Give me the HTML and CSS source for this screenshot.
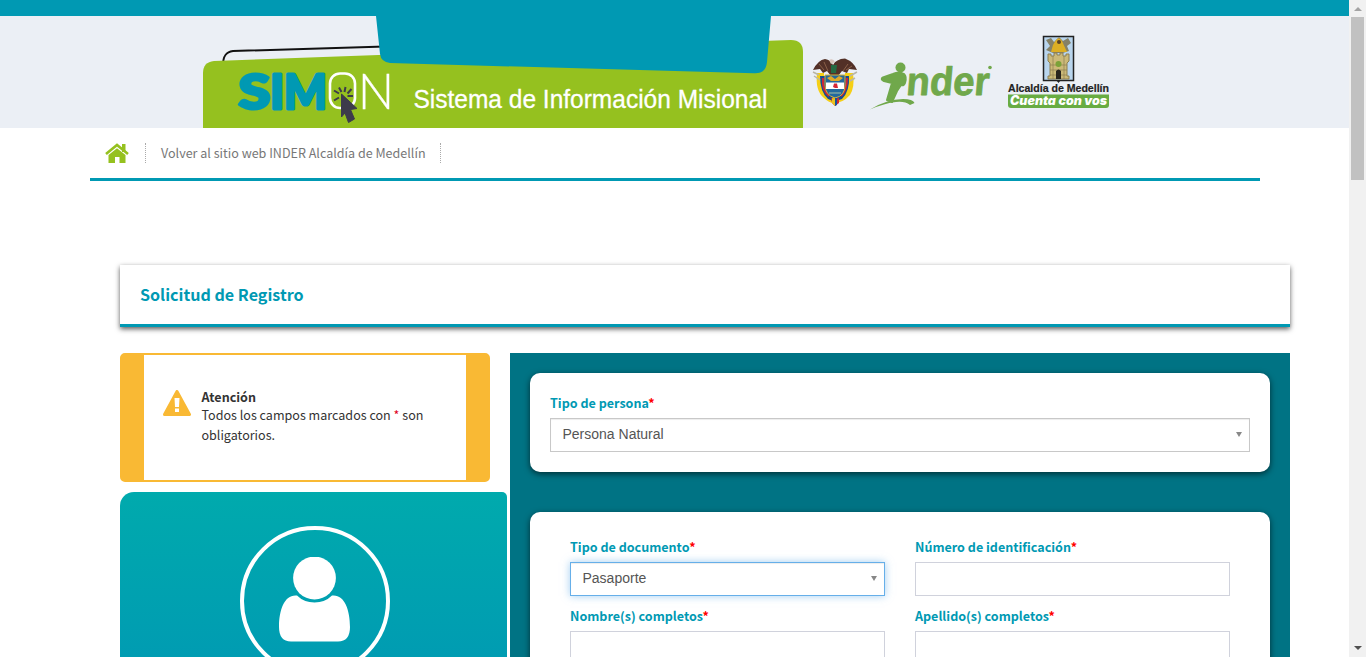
FILE: index.html
```html
<!DOCTYPE html>
<html lang="es">
<head>
<meta charset="utf-8">
<title>SIMON - Solicitud de Registro</title>
<link rel="stylesheet" href="styles.css">
</head>
<body>
<div class="page">
  <header class="banner">
    <svg class="banner-art" width="1349" height="128" viewBox="0 0 1349 128">
      <rect width="1349" height="128" fill="#ebeff5"/>
      <path d="M223 65C223 56 226 52 233 51L385 46.500" fill="none" stroke="#111" stroke-width="2"/>
      <path d="M203 128V73Q203 62 214 61L791 40Q803 40 803 52V128Z" fill="#95c11f"/>
      <path d="M203 0H1349V16H771L767 62Q766 74 754 73.300L390 63Q381 62 380 54L376 16H0V0Z" fill="#0099b3"/>
      <g class="wordmark">
        <text class="sim" x="238.500" y="108.500" textLength="32" lengthAdjust="spacingAndGlyphs">S</text>
        <text class="sim" x="270" y="108.500">I</text>
        <text class="sim" x="284" y="108.500" textLength="43" lengthAdjust="spacingAndGlyphs">M</text>
        <rect x="330" y="73.500" width="25" height="34.500" rx="10" fill="none" stroke="#fff" stroke-width="2.600"/>
        <text class="thin" x="358" y="109" textLength="36" lengthAdjust="spacingAndGlyphs">N</text>
        <path d="M341.500 94L357 108.500L350.500 109.500L354.500 119L348.500 122.500L345 113L341.500 117Z" fill="#3d3b4b" stroke="#3d3b4b" stroke-linejoin="round"/>
        <path d="M334 90.500L339 93.500M339 87.500L341.500 92M345.500 87L344.500 92M351.500 89L347.500 93.500M353 96H347.500M334 100.500L339 97.500" fill="none" stroke="#3d3b4b" stroke-width="2"/>
        <text class="tagline" x="413.500" y="107.500" textLength="354" lengthAdjust="spacingAndGlyphs">Sistema de Información Misional</text>
      </g>
      <g class="emblem">
        <path d="M817 73Q815 91 824 98Q829 103 834 103Q843 103 850 95Q855 87 853 73L845 73V94H824V73Z" fill="#f5cf16"/>
        <path d="M820 76Q820 92 828 99L833 101L831 76ZM849 76Q850 91 842 99L836 101L838 76Z" fill="#174c91"/>
        <path d="M823 78Q822 90 829 96M847 78Q847 90 841 96" fill="none" stroke="#cf2635" stroke-width="2"/>
        <path d="M813 70Q818 60 825 59Q831 60 833 65Q836 59 845 58.500Q854 62 857 70L849 69L847 73L842 71L838 76L831 76L827 71L823 73L820 69Z" fill="#523027"/>
        <path d="M819 64L824 70M824 62L828 71M848 64L843 71M852 66L846 70" stroke="#8a6048"/>
        <path d="M829 60Q833 58 835 62L831 64Z" fill="#d8c5bd"/>
        <path d="M831 65L837 65L836 73L831 73Z" fill="#246a43"/>
        <path d="M813 72L819 75M814 76L820 80M857 72L850 76M855 78L850 81" stroke="#b8b5a7" stroke-width="1.500"/>
        <path d="M825 75H845V85Q845 96 835 98Q825 95 825 85Z" fill="#23699d" stroke="#d7b13b"/>
        <path d="M826 82.500H844V89H826Z" fill="#fff"/>
        <path d="M827 78L831 76L835 79L839 76L843 78L839 81H831Z" fill="#dfa929"/>
        <path d="M834 83.500L837 83.500L838 88L835 88L833 87Z" fill="#d52736"/>
        <path d="M829 93H841" stroke="#8fb4a8" stroke-width="1.200"/>
        <path d="M831 98L835 99L839 98L839 103L835 106L832 103Z" fill="#d12b34"/>
        <path d="M832 98L835 99V106L832 103Z" fill="#eac41e"/><path d="M835 98H837V105L835 106Z" fill="#17539a"/>
      </g>
      <g class="inder" fill="#70a84b">
        <circle cx="900.500" cy="67.500" r="5"/>
        <path d="M883 77.500L893 74Q899 71 904 74Q907 77 905 83Q904 86 901 85L897 91L892 102L887 100L892 83L884 81Q880 79 883 77.500Z" stroke="#70a84b" stroke-width="2" stroke-linejoin="round"/>
        <path d="M870 109.500Q887 99 903 99Q913 99 914.500 103L910 105Q905 101 896 102Q885 103 870 109.500Z"/>
        <text class="nder" transform="translate(905.500 94.500) skewX(-5)" textLength="83" lengthAdjust="spacingAndGlyphs">nder</text>
        <circle cx="990" cy="67.500" r="1.800"/>
      </g>
      <g class="city">
        <rect x="1043.500" y="36.500" width="30" height="44" fill="#b9d5ed" stroke="#222" stroke-width="1.500"/>
        <path d="M1056 80L1058.500 83L1061 80Z" fill="#222"/>
        <path d="M1046 40L1051 38L1054 42L1059 37L1063 41L1068 38L1071 43L1067 46L1069 51L1063 53H1053L1046 50L1050 46Z" fill="#858167"/>
        <path d="M1056 40Q1059 36 1062 41L1067 52H1051L1053 45Z" fill="#dcae24"/>
        <circle cx="1059" cy="42" r="2" fill="#594226"/>
        <path d="M1048 57V54H1051V56H1054V53H1057V55H1060V53H1063V56H1066V54H1069V61L1067 63V76H1069V79H1048V76H1050V63L1048 61Z" fill="#cbb978" stroke="#8d7f50"/>
        <path d="M1050 65H1067M1050 70H1067M1050 75H1067M1053 56V79M1064 56V79" stroke="#8d7f50" stroke-width=".7"/>
        <path d="M1056 79V71Q1058.500 68 1061 71V79Z" fill="#28241d"/>
        <circle cx="1058.500" cy="64" r="3" fill="#7aa239"/>
        <text class="city-name" x="1008" y="92" textLength="101" lengthAdjust="spacingAndGlyphs">Alcaldía de Medellín</text>
        <path d="M1008 94.500H1109V105Q1109 108 1106 108H1011Q1008 108 1008 105Z" fill="#68ac42"/>
        <text class="city-slogan" x="1010" y="105" textLength="97" lengthAdjust="spacingAndGlyphs">Cuenta con vos</text>
      </g>
    </svg>
  </header>
  <nav class="nav">
    <a class="home" href="#"><svg width="24" height="21" viewBox="0 0 24 21"><path d="M1 11L12 2L23 11" fill="none" stroke="#95c11f" stroke-width="2.600"/><path d="M17 1H20.500V9H17ZM12 5.200L20.500 12V20H14.500V14H10V20H3.500V12Z" fill="#95c11f"/></svg></a>
    <a class="back" href="#">Volver al sitio web INDER Alcaldía de Medellín</a>
  </nav>
  <main class="content">
    <h1 class="title">Solicitud de Registro</h1>
    <div class="columns">
      <aside class="side">
        <section class="notice">
          <svg class="warn" width="28" height="26" viewBox="0 0 28 26"><path d="M14 1.500L26.500 24.500H1.500Z" fill="#f9b934" stroke="#f9b934" stroke-width="3" stroke-linejoin="round"/><path d="M11.500 8H16.500L16 17H12ZM12 18.500H16V22H12Z" fill="#fff"/></svg>
          <div class="notice-text"><strong>Atención</strong><p>Todos los campos marcados con <span class="mark">*</span> son<br>obligatorios.</p></div>
        </section>
        <section class="profile">
          <div class="avatar"><svg width="72" height="86" viewBox="0 0 72 86" fill="#fff"><circle cx="35.500" cy="21" r="21.400"/><path d="M18 38.500Q25 45.500 35.500 45.500T53 38.500C65 37 71 52 71 70Q71 84.500 59 84.500H12Q0 84.500 0 70C0 52 6 37 18 38.500Z"/></svg></div>
        </section>
      </aside>
      <form class="form">
        <section class="card person">
          <label>Tipo de persona<i>*</i></label>
          <div class="select"><span>Persona Natural</span><b class="caret"></b></div>
        </section>
        <section class="card details">
          <div class="field"><label>Tipo de documento<i>*</i></label><div class="select focused"><span>Pasaporte</span><b class="caret"></b></div></div>
          <div class="field"><label>Número de identificación<i>*</i></label><input class="input" type="text"></div>
          <div class="field"><label>Nombre(s) completos<i>*</i></label><input class="input" type="text"></div>
          <div class="field"><label>Apellido(s) completos<i>*</i></label><input class="input" type="text"></div>
        </section>
      </form>
    </div>
  </main>
</div>
<div class="scrollbar"><span class="arrow up"></span><span class="thumb"></span><span class="arrow down"></span></div>
</body>
</html>
```
FILE: styles.css
```css
* { box-sizing: border-box; }
body { margin: 0; height: 657px; overflow: hidden; display: flex; background: #fff; color: #333; font: 12.55px/20px "Noto Sans CJK SC", sans-serif; }
.page { width: 1349px; height: 657px; overflow: hidden; }
.banner { height: 128px; }
.banner-art { display: block; }
.sim { font: 900 47px Lato, sans-serif; fill: #0099b3; stroke: #0099b3; stroke-width: 3px; stroke-linejoin: round; }
.thin { font: 300 49px Lato, sans-serif; fill: #fff; stroke: #fff; stroke-width: .4px; }
.tagline { font: 26px "Liberation Sans", sans-serif; fill: #fff; stroke: #fff; stroke-width: .3px; }
.nder { font: bold 40px "Liberation Sans", sans-serif; stroke: #70a84b; stroke-width: .8px; stroke-linejoin: round; }
.city-name { font: bold 11.5px "Liberation Sans", sans-serif; fill: #222; stroke: #222; stroke-width: .2px; }
.city-slogan { font: italic 900 12.5px Inter, sans-serif; fill: #fff; }
.nav { width: 1170px; height: 53px; margin-left: 90px; padding: 15px 15px 0; display: flex; border-bottom: 3px solid #0099b3; }
.home { width: 41px; height: 20px; border-right: 1px dotted #aaa; }
.home svg { display: block; }
.back { height: 20px; width: 295px; padding-left: 15px; border-right: 1px dotted #aaa; color: #777; text-decoration: none; white-space: nowrap; }
.content { width: 1170px; margin: 84px 0 0 120px; }
.title { height: 62px; margin: 0; padding: 19px 20px 0; font-size: 16.1px; line-height: 20px; color: #0099b3; border-bottom: 3px solid #0099b3; box-shadow: 0 2px 5px rgba(0,0,0,.65); }
.columns { display: flex; margin-top: 26px; }
.side { width: 390px; }
.notice { width: 370px; height: 129px; display: flex; padding: 34px 18px 0 19px; border: 2px solid #f9b934; border-width: 2px 24px; border-radius: 5px; }
.warn { flex: none; margin: 1px 10.5px 0 0; }
.notice-text { white-space: nowrap; line-height: 20px; }
.notice-text strong { display: block; line-height: 16px; }
.notice-text p { margin: 0; }
.mark { color: #d02; }
.profile { width: 387px; height: 300px; margin-top: 10px; padding: 34px 0 0 120px; border-radius: 14px 5px 0 0; background: linear-gradient(#00aaad, #0099b3 200px); }
.avatar { width: 150px; height: 150px; border: 4px solid #fff; border-radius: 50%; padding: 27px 0 0 35px; }
.form { width: 780px; height: 500px; padding: 20px; background: #007384; }
.card { background: #fff; border-radius: 10px; box-shadow: 0 2px 6px rgba(0,0,0,.6); }
.person { height: 99px; padding: 20px; }
.details { height: 400px; margin-top: 40px; padding: 25px 40px; display: grid; grid-template-columns: 315px 315px; column-gap: 30px; grid-auto-rows: 69px; align-content: start; }
label { display: block; height: 25px; line-height: 20px; color: #0099b3; font-weight: bold; }
label i { font-style: normal; color: red; }
.select, .input { display: flex; width: 100%; height: 34px; border: 1px solid #d0d2dc; background: #fff; }
.select { justify-content: space-between; padding: 5px 7px 0 11.5px; border-color: #c8c8c8; box-shadow: inset 0 1px 1px rgba(0,0,0,.075); font: 14px/20px "Liberation Sans", sans-serif; color: #555; }
.focused { border-color: #66afe9; box-shadow: inset 0 1px 1px rgba(0,0,0,.075), 0 0 8px rgba(102,175,233,.6); }
.caret { border: 3.5px solid transparent; border-top: 5px solid #888; border-bottom: 0; height: 5px; margin-top: 8px; }
.scrollbar { width: 17px; height: 657px; background: #f1f1f1; display: flex; flex-direction: column; align-items: center; padding: 7px 2px; }
.arrow { border: 4px solid transparent; }
.up { border-top: 0; border-bottom: 4px solid #a3a3a3; }
.down { border-bottom: 0; border-top: 4px solid #505050; margin-top: auto; }
.thumb { width: 13px; height: 163px; background: #c1c1c1; margin-top: 6px; }
```
